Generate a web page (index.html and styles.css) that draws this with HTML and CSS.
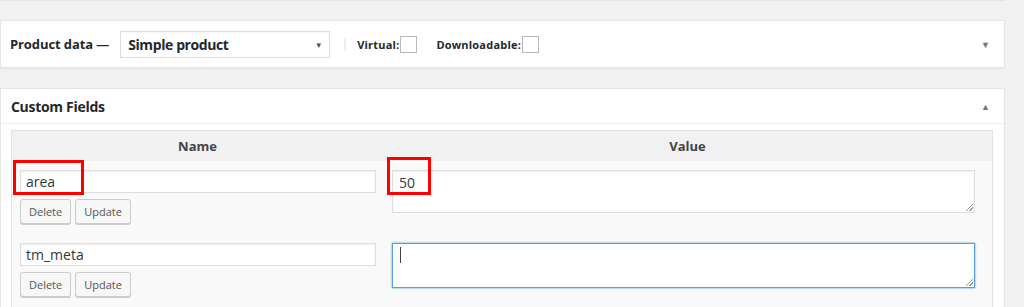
FILE: index.html
```html
<!DOCTYPE html>
<html lang="en">
  <head>
    <meta charset="UTF-8" />
    <title>Custom Fields</title>
    <link rel="stylesheet" href="styles.css">
  </head>
  <body>
    <div class="page">
      <div class="edge"></div>

      <div class="postbox product-data">
        <span class="box-title">Product data &mdash;</span>
        <div class="select">
          <span>Simple product</span>
          <span class="caret">&#9660;</span>
        </div>
        <span class="divider"></span>
        <label class="check">Virtual:<span class="checkbox"></span></label>
        <label class="check">Downloadable:<span class="checkbox"></span></label>
        <span class="toggle">&#9660;</span>
      </div>

      <div class="postbox custom-fields">
        <div class="box-head">
          <span class="box-title">Custom Fields</span>
          <span class="toggle">&#9650;</span>
        </div>
        <div class="box-inside">
          <div class="meta-table">
            <div class="meta-row meta-head">
              <div>Name</div>
              <div>Value</div>
            </div>
            <div class="meta-row">
              <div class="name-cell">
                <div class="field">area</div>
                <div class="buttons">
                  <span class="button">Delete</span>
                  <span class="button">Update</span>
                </div>
                <span class="mark mark-name"></span>
              </div>
              <div class="value-cell">
                <div class="textarea">50<span class="grip"></span></div>
                <span class="mark mark-value"></span>
              </div>
            </div>
            <div class="meta-row">
              <div class="name-cell">
                <div class="field">tm_meta</div>
                <div class="buttons">
                  <span class="button">Delete</span>
                  <span class="button">Update</span>
                </div>
              </div>
              <div class="value-cell">
                <div class="textarea focus"><span class="cursor"></span><span class="grip"></span></div>
              </div>
            </div>
          </div>
        </div>
      </div>
    </div>
  </body>
</html>
```

FILE: styles.css
```css
body {
  margin: 0;
  background: #f1f1f1;
  font-family: "Open Sans", "Noto Sans", sans-serif;
  color: #23282d;
}
.page {
  width: 1005px;
}
.edge {
  height: 1px;
  background: #e5e5e5;
}
.postbox {
  background: #fff;
  border: 1px solid #e5e5e5;
  box-shadow: 0 1px 1px rgba(0, 0, 0, 0.04);
}
.box-title {
  font-size: 13px;
  font-weight: 700;
  letter-spacing: -0.1px;
}
.toggle {
  margin-left: auto;
  margin-right: 14px;
  font-size: 9px;
  color: #72777c;
}

/* product data */
.product-data {
  margin-top: 19px;
  height: 46px;
  display: flex;
  align-items: center;
  padding-left: 9px;
}
.select {
  margin-left: 11px;
  width: 210px;
  height: 27px;
  border: 1px solid #ddd;
  box-sizing: border-box;
  display: flex;
  align-items: center;
  padding: 0 7px;
  font-size: 14px;
  font-weight: 700;
  letter-spacing: -0.4px;
  box-shadow: inset 0 1px 2px rgba(0, 0, 0, 0.04);
}
.select .caret {
  margin-left: auto;
  font-size: 8px;
  color: #555;
}
.divider {
  width: 2px;
  height: 13px;
  background: #eee;
  margin-left: 14px;
  margin-right: 11px;
}
.check {
  display: flex;
  align-items: center;
  font-size: 11px;
  font-weight: 700;
  letter-spacing: 0.2px;
  margin-right: 19px;
  padding-top: 1px;
}
.checkbox {
  width: 15px;
  height: 15px;
  border: 1px solid #b4b9be;
  margin-left: 1px;
  background: #fff;
}

/* custom fields */
.custom-fields {
  margin-top: 20px;
  height: 230px;
}
.box-head {
  height: 34px;
  display: flex;
  align-items: center;
  padding-left: 10px;
  border-bottom: 1px solid #eee;
}
.box-head .box-title {
  font-size: 14px;
  letter-spacing: -0.3px;
}
.box-inside {
  padding: 6px 11px 0 10px;
}
.meta-table {
  border: 1px solid #e1e1e1;
  background: #f9f9f9;
}
.meta-row {
  display: grid;
  grid-template-columns: 371px 1fr;
}
.meta-head {
  background: #f1f1f1;
  height: 30px;
  align-items: center;
  text-align: center;
  font-size: 13px;
  font-weight: 700;
  color: #444;
}
.name-cell,
.value-cell {
  position: relative;
  padding: 9px 7px 10px 8px;
}
.value-cell {
  padding: 9px 17px 10px 9px;
}
.field {
  height: 23px;
  border: 1px solid #ddd;
  background: #fff;
  box-sizing: border-box;
  font-size: 14px;
  line-height: 21px;
  padding-left: 5px;
  color: #32373c;
  box-shadow: inset 0 1px 2px rgba(0, 0, 0, 0.07);
}
.buttons {
  display: flex;
  gap: 4px;
  margin-top: 6px;
}
.button {
  height: 25px;
  box-sizing: border-box;
  border: 1px solid #ccc;
  border-radius: 3px;
  background: #f7f7f7;
  box-shadow: 0 1px 0 #ccc;
  font-size: 11px;
  line-height: 23px;
  padding: 0 8px;
  color: #555;
}
.textarea {
  position: relative;
  height: 43px;
  box-sizing: border-box;
  border: 1px solid #ddd;
  background: #fff;
  font-size: 14px;
  line-height: 18px;
  padding: 3px 6px;
  color: #32373c;
  box-shadow: inset 0 1px 2px rgba(0, 0, 0, 0.07);
}
.textarea.focus {
  height: 45px;
  border-color: #5b9dd9;
  box-shadow: 0 0 2px rgba(30, 140, 190, 0.8);
}
.cursor {
  display: block;
  width: 1px;
  height: 16px;
  background: #444;
  margin-left: 1px;
}
.grip {
  position: absolute;
  right: 1px;
  bottom: 1px;
  width: 7px;
  height: 7px;
  background: linear-gradient(135deg, transparent 45%, #999 46%, #999 54%, transparent 55%, transparent 70%, #999 71%, #999 79%, transparent 80%);
}

/* highlight marks */
.mark {
  position: absolute;
  border: 3px solid #f00;
  box-sizing: border-box;
}
.mark-name {
  left: 1px;
  top: -1px;
  width: 71px;
  height: 35px;
}
.mark-value {
  left: 4px;
  top: -4px;
  width: 44px;
  height: 38px;
}
```
